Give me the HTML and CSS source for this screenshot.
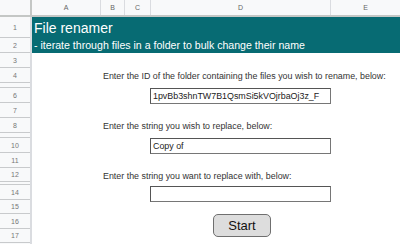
FILE: index.html
```html
<!DOCTYPE html>
<html>
<head>
<meta charset="utf-8">
<link rel="stylesheet" href="styles.css">
</head>
<body>
<div class="sheet">
  <div class="corner"></div>
  <div class="colheads">
    <div class="ch wa">A</div>
    <div class="ch wb">B</div>
    <div class="ch wc">C</div>
    <div class="ch wd">D</div>
    <div class="ch we">E</div>
  </div>
  <div class="rowheads">
    <div class="rh h21">1</div>
    <div class="rh h15">2</div>
    <div class="rh h15">3</div>
    <div class="rh h15">4</div>
    <div class="rh h5">5</div>
    <div class="rh h15">6</div>
    <div class="rh h15">7</div>
    <div class="rh h15">8</div>
    <div class="rh h5">9</div>
    <div class="rh h15">10</div>
    <div class="rh h15">11</div>
    <div class="rh h14">12</div>
    <div class="rh h3">13</div>
    <div class="rh h15">14</div>
    <div class="rh h14">15</div>
    <div class="rh h15">16</div>
    <div class="rh h14">17</div>
  </div>
  <div class="cells">
    <div class="banner">
      <div class="title">File renamer</div>
      <div class="subtitle">- iterate through files in a folder to bulk change their name</div>
    </div>
    <div class="label r4">Enter the ID of the folder containing the files you wish to rename, below:</div>
    <div class="field r6">1pvBb3shnTW7B1QsmSi5kVOjrbaOj3z_F</div>
    <div class="label r8">Enter the string you wish to replace, below:</div>
    <div class="field r10">Copy of</div>
    <div class="label r12">Enter the string you want to replace with, below:</div>
    <div class="field r14"></div>
    <div class="start">Start</div>
  </div>
</div>
</body>
</html>
```
FILE: styles.css
```css
html, body {
  margin: 0;
  padding: 0;
  background: #ffffff;
  overflow: hidden;
}

.sheet {
  width: 400px;
  height: 244px;
  display: grid;
  grid-template-columns: 32px 1fr;
  grid-template-rows: 17px 1fr;
  font-family: "Liberation Sans", Arial, sans-serif;
}

.corner {
  background: #f8f9fa;
  border-right: 2px solid #c4c7c5;
  border-bottom: 2px solid #c4c7c5;
  box-sizing: border-box;
}

.colheads {
  display: flex;
  background: #f8f9fa;
  border-bottom: 2px solid #c4c7c5;
  box-sizing: border-box;
}

.ch {
  box-sizing: border-box;
  border-right: 1px solid #dadce0;
  font-size: 7px;
  color: #666;
  display: flex;
  align-items: center;
  justify-content: center;
  flex: none;
}

.wa { width: 69px; }
.wb { width: 24px; }
.wc { width: 26px; }
.wd { width: 180px; }
.we { flex: 1; border-right: none; }

.rowheads {
  display: flex;
  flex-direction: column;
  background: #f8f9fa;
  border-right: 2px solid #dadce0;
  box-sizing: border-box;
}

.rh {
  box-sizing: border-box;
  border-bottom: 1px solid #c8cacc;
  font-size: 7px;
  color: #777;
  text-align: center;
  overflow: hidden;
  line-height: 15px;
  flex: none;
}

.h21 { height: 21px; line-height: 21px; }
.h15 { height: 15px; }
.h14 { height: 14px; line-height: 14px; }
.h5 { height: 5px; line-height: 16px; }
.h3 { height: 3px; line-height: 16px; }

.cells {
  display: grid;
  grid-template-columns: 69px 24px 26px 180px 1fr;
  grid-template-rows: 21px 15px 15px 15px 5px 15px 15px 15px 5px 15px 15px 14px 3px 15px 14px 15px 14px 1fr;
}

.banner {
  grid-row: 1 / 3;
  grid-column: 1 / -1;
  background: #076b73;
  color: #ffffff;
  display: grid;
  grid-template-rows: 21px 15px;
  padding-left: 2px;
}

.title {
  font-size: 14px;
  line-height: 21px;
  padding-top: 1px;
  white-space: nowrap;
}

.subtitle {
  font-size: 10.6px;
  line-height: 15px;
  white-space: nowrap;
}

.label {
  grid-column: 1 / -1;
  padding-left: 71px;
  padding-top: 1px;
  font-size: 8.9px;
  line-height: 15px;
  color: #333333;
  white-space: nowrap;
}

.r4 { grid-row: 4; }
.r8 { grid-row: 8; }
.r12 { grid-row: 12; }

.field {
  grid-column: 4;
  margin-left: -1px;
  height: 16px;
  box-sizing: border-box;
  border: 1px solid #767676;
  border-top-color: #555;
  border-left-color: #555;
  font-size: 8.9px;
  line-height: 14px;
  padding-left: 2px;
  color: #222;
  white-space: nowrap;
  overflow: hidden;
  background: #fff;
}

.r6 { grid-row: 6; }
.r10 { grid-row: 10; }
.r14 { grid-row: 14 / 16; margin-top: 1px; }

.start {
  grid-column: 4;
  grid-row: 16 / 19;
  justify-self: center;
  align-self: start;
  width: 58px;
  height: 23px;
  box-sizing: border-box;
  margin-left: 2px;
  border: 1px solid #6f6f6f;
  border-radius: 5px;
  background: #dddddd;
  font-size: 13px;
  line-height: 21px;
  text-align: center;
  color: #111;
}
```
